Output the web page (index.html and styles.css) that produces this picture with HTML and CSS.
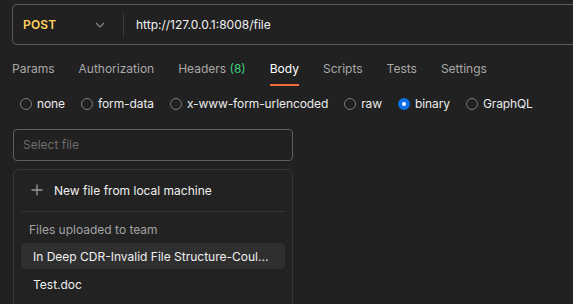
FILE: index.html
```html
<!DOCTYPE html>
<html>
<head>
<meta charset="utf-8">
<link rel="stylesheet" href="styles.css">
</head>
<body>
<div class="page">
  <div class="urlbar">
    <div class="method">
      <span class="method-name">POST</span>
      <svg class="chev" width="10" height="6" viewBox="0 0 10 6"><path d="M1 1l4 4 4-4" fill="none" stroke="#8c8c8c" stroke-width="1.2"/></svg>
    </div>
    <div class="vdiv"></div>
    <div class="url">http://127.0.0.1:8008/file</div>
  </div>

  <div class="tabs">
    <div class="tab">Params</div>
    <div class="tab">Authorization</div>
    <div class="tab">Headers <span class="count">(8)</span></div>
    <div class="tab active">Body</div>
    <div class="tab">Scripts</div>
    <div class="tab">Tests</div>
    <div class="tab">Settings</div>
  </div>

  <div class="radios">
    <label class="radio"><span class="dot"></span>none</label>
    <label class="radio"><span class="dot"></span>form-data</label>
    <label class="radio"><span class="dot"></span>x-www-form-urlencoded</label>
    <label class="radio"><span class="dot"></span>raw</label>
    <label class="radio"><span class="dot on"></span>binary</label>
    <label class="radio"><span class="dot"></span>GraphQL</label>
  </div>

  <div class="select">Select file</div>

  <div class="menu">
    <div class="menu-row new">
      <svg class="plus" width="12" height="12" viewBox="0 0 12 12"><path d="M6 0.5v11M0.5 6h11" stroke="#9a9a9a" stroke-width="1.3" fill="none"/></svg>
      <span>New file from local machine</span>
    </div>
    <div class="hdiv"></div>
    <div class="menu-head">Files uploaded to team</div>
    <div class="menu-row file hover">In Deep CDR-Invalid File Structure-Coul...</div>
    <div class="menu-row file">Test.doc</div>
  </div>
</div>
</body>
</html>
```
FILE: styles.css
```css
html, body {
  margin: 0;
  padding: 0;
  background: #212121;
  overflow: hidden;
}
body {
  font-family: Inter, "Noto Sans", sans-serif;
  font-size: 12px;
  color: #e8e8e8;
}
.page {
  padding: 4px 0 0 12px;
}
.urlbar {
  display: flex;
  align-items: center;
  height: 39px;
  border: 1px solid #5a5a5a;
  border-right: none;
  border-radius: 5px 0 0 5px;
}
.method {
  padding-left: 10px;
  display: flex;
  align-items: center;
  justify-content: space-between;
  padding-right: 18px;
  box-sizing: border-box;
  width: 110px;
}
.method-name {
  color: #ffd35f;
  font-weight: 600;
  font-size: 12px;
  letter-spacing: 0.2px;
}
.chev {
  display: block;
}
.vdiv {
  width: 1px;
  height: 24px;
  background: #3c3c3c;
}
.url {
  padding-left: 12px;
  color: #f2f2f2;
  font-size: 12px;
}
.tabs {
  display: flex;
  gap: 24px;
  margin-top: 10px;
}
.tab {
  padding: 6px 0 7px;
  line-height: 16px;
  color: #a8a8a8;
  border-bottom: 2px solid transparent;
}
.tab.active {
  color: #ffffff;
  border-bottom-color: #f26b3a;
}
.count {
  color: #3ccf7c;
}
.radios {
  display: flex;
  gap: 16px;
  margin-top: 10px;
  padding-left: 8px;
  line-height: 16px;
  letter-spacing: -0.1px;
}
.radio {
  display: flex;
  align-items: center;
  gap: 5px;
  color: #ececec;
}
.dot {
  width: 10px;
  height: 10px;
  border: 1px solid #7a7a7a;
  border-radius: 50%;
  box-sizing: content-box;
}
.dot.on {
  background: #fff;
  border: 4px solid #0c6fe4;
  width: 4px;
  height: 4px;
}
.select {
  margin-top: 17px;
  margin-left: 1px;
  height: 30px;
  box-sizing: content-box;
  border: 1px solid #5e5e5e;
  border-radius: 4px;
  padding-left: 9px;
  width: 269px;
  line-height: 30px;
  color: #6b6b6b;
}
.menu {
  margin-top: 8px;
  margin-left: 1px;
  width: 264px;
  border: 1px solid #363636;
  border-bottom: none;
  border-radius: 6px 6px 0 0;
  padding: 7px 7px 8px;
  background: #222222;
}
.menu-row {
  display: flex;
  align-items: center;
  height: 26px;
  border-radius: 4px;
  color: #f0f0f0;
}
.menu-row.new {
  padding-left: 10px;
  gap: 11px;
}
.plus {
  display: block;
}
.hdiv {
  height: 1px;
  background: #363636;
  margin-top: 8px;
}
.menu-head {
  height: 24px;
  line-height: 24px;
  margin-top: 6px;
  padding-left: 8px;
  color: #a3a3a3;
  margin-bottom: 1px;
}
.menu-row.file {
  padding-left: 12px;
  margin-bottom: 2px;
}
.menu-row.hover {
  background: #2f2f2f;
}
```
